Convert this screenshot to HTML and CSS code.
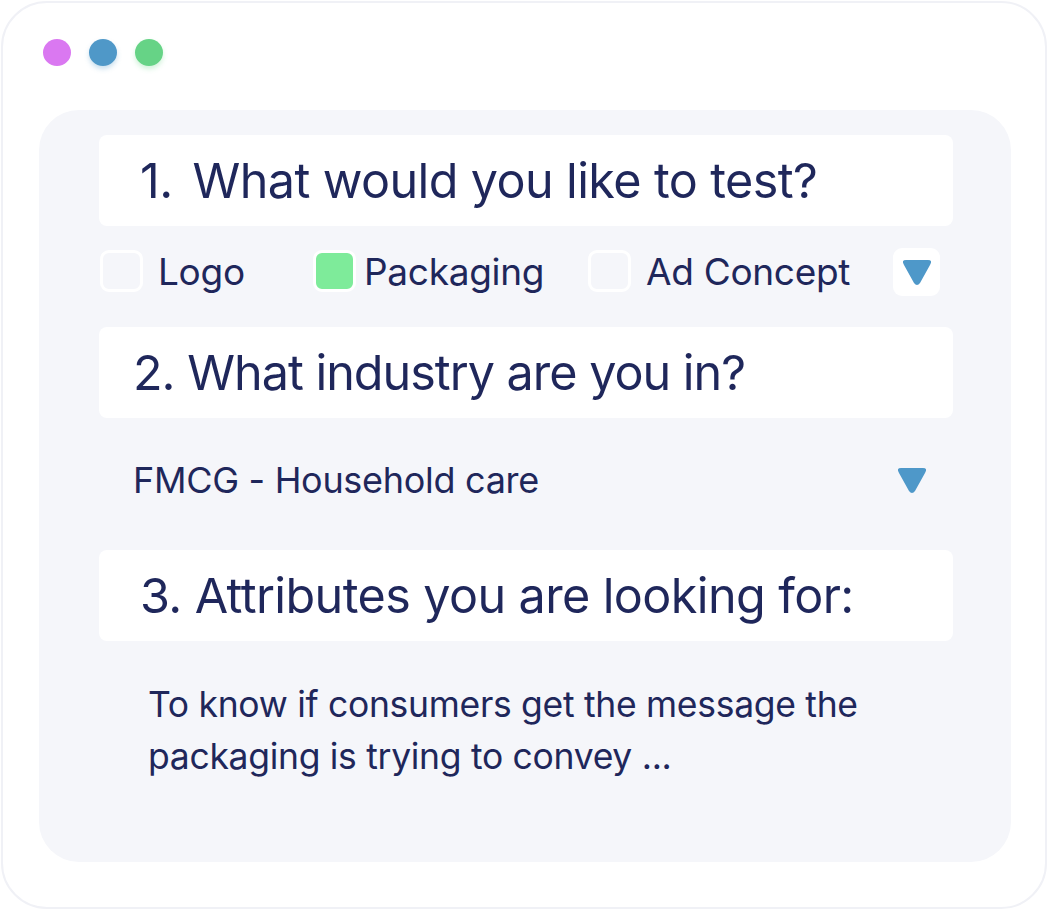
FILE: index.html
```html
<!DOCTYPE html>
<html lang="en">
  <head>
    <meta charset="UTF-8" />
    <meta name="viewport" content="width=device-width, initial-scale=1.0" />
    <title>test-brief</title>
    <link rel="stylesheet" href="styles.css">
  </head>
  <body>
    <div class="window">
      <div class="dots">
        <span class="dot pink"></span>
        <span class="dot blue"></span>
        <span class="dot green"></span>
      </div>
      <div class="panel">
        <div class="question q1"><span class="num">1.</span>What would you like to test?</div>

        <div class="options">
          <label class="option"><span class="box"></span>Logo</label>
          <label class="option"><span class="box checked"></span>Packaging</label>
          <label class="option"><span class="box"></span>Ad Concept</label>
          <span class="arrow-box">
            <svg width="34" height="30" viewBox="0 0 34 30"><path d="M6 3 H28 Q33 3 30 8 L20 26 Q17 30 14 26 L4 8 Q1 3 6 3 Z" fill="#4e98c9"/></svg>
          </span>
        </div>

        <div class="question q2">2. What industry are you in?</div>

        <div class="select">
          <span>FMCG - Household care</span>
          <svg width="34" height="30" viewBox="0 0 34 30"><path d="M6 3 H28 Q33 3 30 8 L20 26 Q17 30 14 26 L4 8 Q1 3 6 3 Z" fill="#4e98c9"/></svg>
        </div>

        <div class="question q3">3. Attributes you are looking for:</div>

        <p class="answer">To know if consumers get the message the<br>packaging is trying to convey ...</p>
      </div>
    </div>
  </body>
</html>
```

FILE: styles.css
```css
body {
  margin: 0;
  padding: 0;
  background-color: #ffffff;
  font-family: Inter, "Open Sans", sans-serif;
  color: #1f275b;
}
.window {
  box-sizing: border-box;
  width: 1046px;
  height: 908px;
  margin: 1px;
  border: 2px solid #f0f1f6;
  border-radius: 46px;
  background-color: #ffffff;
  padding: 36px 34px 46px 36px;
}
.dots {
  display: flex;
  gap: 18px;
  padding-left: 4px;
}
.dot {
  width: 28px;
  height: 27px;
  border-radius: 50%;
}
.pink {
  background-color: #da78f1;
}
.blue {
  background-color: #4f98c8;
  box-shadow: 0 3px 5px rgba(79, 152, 200, 0.3);
}
.green {
  background-color: #66d386;
  box-shadow: 0 3px 5px rgba(102, 211, 134, 0.3);
}
.panel {
  margin-top: 44px;
  height: 752px;
  box-sizing: border-box;
  background-color: #f5f6fa;
  border-radius: 40px;
  padding: 25px 58px 0 60px;
}
.question {
  background-color: #ffffff;
  border-radius: 8px;
  height: 91px;
  display: flex;
  align-items: center;
  font-size: 48.5px;
  letter-spacing: -0.6px;
  white-space: nowrap;
}
.q1 {
  padding-left: 41px;
}
.q1 .num {
  margin-right: 20px;
}
.q2 {
  padding-left: 34px;
  letter-spacing: -1px;
}
.q3 {
  padding-left: 41px;
}
.options {
  display: flex;
  align-items: flex-start;
  box-sizing: border-box;
  height: 101px;
  padding: 22px 0 0 1px;
  font-size: 37px;
  letter-spacing: -0.3px;
}
.option {
  display: flex;
  align-items: center;
  height: 46px;
}
.option .box {
  box-sizing: border-box;
  width: 43px;
  height: 42px;
  border: 3px solid #ffffff;
  border-radius: 9px;
  margin-right: 15px;
}
.option .box.checked {
  background-color: #7eeb9a;
  margin-right: 8px;
}
.option:nth-child(1) {
  width: 213px;
}
.option:nth-child(2) {
  width: 275px;
}
.option:nth-child(3) {
  width: 305px;
}
.arrow-box {
  width: 47px;
  height: 48px;
  background-color: #ffffff;
  border-radius: 9px;
  display: flex;
  align-items: center;
  justify-content: center;
}
.select {
  display: flex;
  align-items: center;
  justify-content: space-between;
  box-sizing: border-box;
  height: 132px;
  padding: 0 24px 8px 34px;
  font-size: 36px;
  letter-spacing: -0.3px;
}
.answer {
  margin: 38px 0 0 49px;
  font-size: 35.5px;
  line-height: 52px;
  letter-spacing: -0.3px;
}
```
